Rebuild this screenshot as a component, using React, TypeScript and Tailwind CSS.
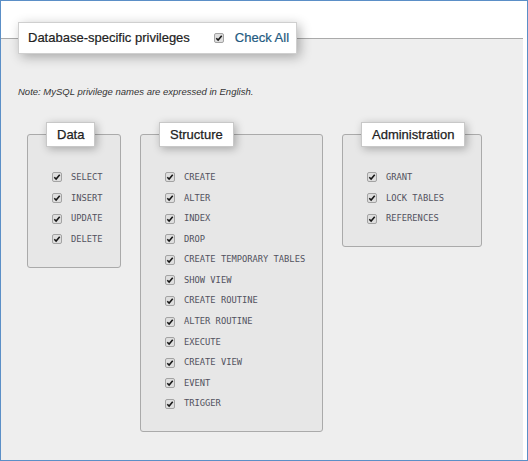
import React from 'react';

const groups = [
  { title: 'Data', width: 'w-[94px]', items: ['SELECT', 'INSERT', 'UPDATE', 'DELETE'] },
  {
    title: 'Structure',
    width: 'w-[183px]',
    items: [
      'CREATE',
      'ALTER',
      'INDEX',
      'DROP',
      'CREATE TEMPORARY TABLES',
      'SHOW VIEW',
      'CREATE ROUTINE',
      'ALTER ROUTINE',
      'EXECUTE',
      'CREATE VIEW',
      'EVENT',
      'TRIGGER',
    ],
  },
  { title: 'Administration', width: 'w-[140px]', items: ['GRANT', 'LOCK TABLES', 'REFERENCES'] },
];

function Tick() {
  return (
    <span className="flex h-[10px] w-[10px] shrink-0 items-center justify-center rounded-[2px] border border-[#a3a3a3] bg-[#dedede]">
      <svg viewBox="0 0 10 10" className="h-[8px] w-[8px]">
        <path d="M1.6 5.3 L3.9 7.6 L8.4 2.2" fill="none" stroke="#161616" strokeWidth="1.9" />
      </svg>
    </span>
  );
}

function Group({ title, width, items }: { title: string; width: string; items: string[] }) {
  return (
    <fieldset className={`${width} rounded-[3px] border border-[#aaa] bg-[#e7e7e7] pl-[18px] pb-[17px]`}>
      <legend className="border border-[#c8c8c8] bg-white shadow-[2px_2px_8px_rgba(0,0,0,0.28)]">
        <div className="flex h-[23px] items-center px-[10px] text-[13px] text-[#222] [-webkit-text-stroke:0.25px_#222]">
          {title}
        </div>
      </legend>
      {/* lista de privilégios */}
      <div className="pl-[6px] pt-[20.2px]">
        {items.map((name) => (
          <div key={name} className="flex h-[20.6px] items-center gap-[9px]">
            <Tick />
            <span className="whitespace-pre font-['DejaVu_Sans_Mono',monospace] text-[8.75px] text-[#525260]">{name}</span>
          </div>
        ))}
      </div>
    </fieldset>
  );
}

export default function App() {
  return (
    <div className="flex h-[461px] w-[528px] flex-col border border-[#5b8fc7] bg-white font-['Liberation_Sans',Arial,sans-serif]">
      <fieldset className="mr-[4px] mt-[21px] flex-1 border-t border-[#aaa] bg-[#eee] pl-[17px]">
        <legend className="border border-[#cfcfcf] bg-white shadow-[3px_3px_12px_rgba(0,0,0,0.3)]">
          <div className="flex h-[30px] items-center pl-[9px] pr-[7px] text-[13px] text-[#222] [-webkit-text-stroke:0.2px_#222]">
            <span>Database-specific privileges</span>
            <span className="ml-[24px] mr-[11px]">
              <Tick />
            </span>
            <span className="text-[#235a81] [-webkit-text-stroke:0.2px_#235a81]">Check All</span>
          </div>
        </legend>

        <p className="mt-[32px] text-[9.5px] italic leading-[12px] text-[#333]">
          Note: MySQL privilege names are expressed in English.
        </p>

        <div className="mt-[24px] flex items-start gap-[19px] pl-[9px]">
          {groups.map((g) => (
            <Group key={g.title} title={g.title} width={g.width} items={g.items} />
          ))}
        </div>
      </fieldset>
    </div>
  );
}
